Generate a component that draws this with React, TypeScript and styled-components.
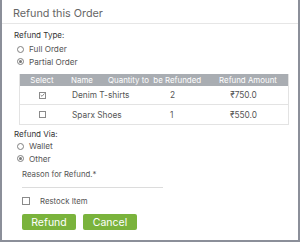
import React from "react";
import styled, { createGlobalStyle } from "styled-components";

const GlobalStyle = createGlobalStyle`
  html, body {
    margin: 0;
    padding: 0;
    background: #ffffff;
  }
  * {
    box-sizing: border-box;
  }
`;

const Dialog = styled.div`
  width: 300px;
  height: 242px;
  background: #ffffff;
  border: 2px solid #8b8f99;
  border-top: none;
  font-family: "Inter", "Noto Sans", sans-serif;
  color: #3a3a3a;
  display: flex;
  flex-direction: column;
`;

const Header = styled.div`
  height: 24px;
  padding: 3px 0 0 11px;
  border-bottom: 1px solid #e6e6e6;
  font-size: 10.8px;
  color: #666;
  display: flex;
  align-items: center;
`;

const Body = styled.div`
  padding: 6px 0 0 12px;
  display: flex;
  flex-direction: column;
`;

const Label = styled.div`
  font-size: 8px;
  height: 10px;
  line-height: 10px;
  color: #333;
`;

const RadioRow = styled.label`
  display: flex;
  align-items: center;
  gap: 5px;
  padding-left: 3px;
  height: 12.5px;
  font-size: 8.2px;
  color: #555;
`;

const Radio = styled.span<{ $on?: boolean }>`
  width: 7px;
  height: 7px;
  border-radius: 50%;
  border: 1px solid #808080;
  display: flex;
  align-items: center;
  justify-content: center;
  &::after {
    content: "";
    width: 3px;
    height: 3px;
    border-radius: 50%;
    background: ${(p) => (p.$on ? "#777" : "transparent")};
  }
`;

const Table = styled.div`
  margin-top: 6px;
  width: 270px;
  margin-left: 5px;
  border: 1px solid #e3e3e3;
  border-top: none;
  font-size: 8.3px;
`;

const Grid = styled.div<{ $head?: boolean }>`
  display: grid;
  grid-template-columns: 44px 36px 108px 1fr;
  align-items: center;
  height: ${(p) => (p.$head ? "12px" : "19px")};
  background: ${(p) => (p.$head ? "#a9adb2" : "#fff")};
  color: ${(p) => (p.$head ? "#fff" : "#555")};
  font-size: ${(p) => (p.$head ? "7.9px" : "8.3px")};
  border-bottom: ${(p) => (p.$head ? "none" : "1px solid #e3e3e3")};
  &:last-child {
    border-bottom: none;
  }
`;

const Cell = styled.div<{ $align?: string; $pad?: number; $right?: number }>`
  white-space: nowrap;
  display: flex;
  padding-left: ${(p) => p.$pad || 0}px;
  padding-right: ${(p) => p.$right || 0}px;
  justify-content: ${(p) =>
    p.$align === "center" ? "center" : "flex-start"};
`;

const Box = styled.span<{ $size?: number }>`
  width: ${(p) => p.$size || 8}px;
  height: ${(p) => p.$size || 8}px;
  border: 1px solid #8a8a8a;
  display: flex;
  align-items: center;
  justify-content: center;
  background: #fff;
`;

const Section = styled.div<{ $top: number }>`
  margin-top: ${(p) => p.$top}px;
`;

const Reason = styled.div`
  margin-top: 4px;
  width: 141px;
  margin-left: 8px;
  font-size: 7.8px;
  color: #555;
  padding-bottom: 8px;
  border-bottom: 1px solid #dcdcdc;
`;

const CheckRow = styled.label`
  margin-top: 8px;
  margin-left: 8px;
  display: flex;
  align-items: center;
  gap: 10px;
  font-size: 7.8px;
  color: #555;
`;

const Buttons = styled.div`
  margin-top: 8px;
  margin-left: 8px;
  display: flex;
  gap: 7px;
`;

const Button = styled.button`
  width: 54px;
  height: 16px;
  border: none;
  border-radius: 2px;
  background: #7ab33c;
  color: #fff;
  font-family: inherit;
  font-size: 10.5px;
  font-weight: 400;
  padding: 0;
  display: flex;
  align-items: center;
  justify-content: center;
`;

const Check = () => (
  <svg width="6" height="6" viewBox="0 0 6 6">
    <path d="M0.8 3.1 L2.4 4.6 L5.3 1.2" stroke="#808080" strokeWidth="1.1" fill="none" />
  </svg>
);

const items = [
  { name: "Denim T-shirts", qty: 2, amount: "750.0", checked: true },
  { name: "Sparx Shoes", qty: 1, amount: "550.0", checked: false },
];

export default function App() {
  return (
    <>
      <GlobalStyle />
      <Dialog>
        <Header>Refund this Order</Header>
        <Body>
          <Label>Refund Type:</Label>
          <Section $top={3}>
            <RadioRow>
              <Radio />
              Full Order
            </RadioRow>
            <RadioRow>
              <Radio $on />
              Partial Order
            </RadioRow>
          </Section>
          <Table>
            <Grid $head>
              <Cell $align="center">Select</Cell>
              <Cell $pad={7}>Name</Cell>
              <Cell $pad={8}>Quantity to&nbsp; be Refunded</Cell>
              <Cell $align="center">Refund Amount</Cell>
            </Grid>
            {items.map((it) => (
              <Grid key={it.name}>
                <Cell $align="center">
                  <Box $size={7}>{it.checked && <Check />}</Box>
                </Cell>
                <Cell $pad={8}>{it.name}</Cell>
                <Cell $pad={70}>{it.qty}</Cell>
                <Cell $align="center" $right={9}>₹{it.amount}</Cell>
              </Grid>
            ))}
          </Table>
          <Section $top={4}>
            <Label>Refund Via:</Label>
          </Section>
          <Section $top={1}>
            <RadioRow>
              <Radio />
              Wallet
            </RadioRow>
            <RadioRow>
              <Radio $on />
              Other
            </RadioRow>
          </Section>
          <Reason>Reason for Refund.*</Reason>
          <CheckRow>
            <Box $size={8} />
            Restock Item
          </CheckRow>
          <Buttons>
            <Button>Refund</Button>
            <Button>Cancel</Button>
          </Buttons>
        </Body>
      </Dialog>
    </>
  );
}
